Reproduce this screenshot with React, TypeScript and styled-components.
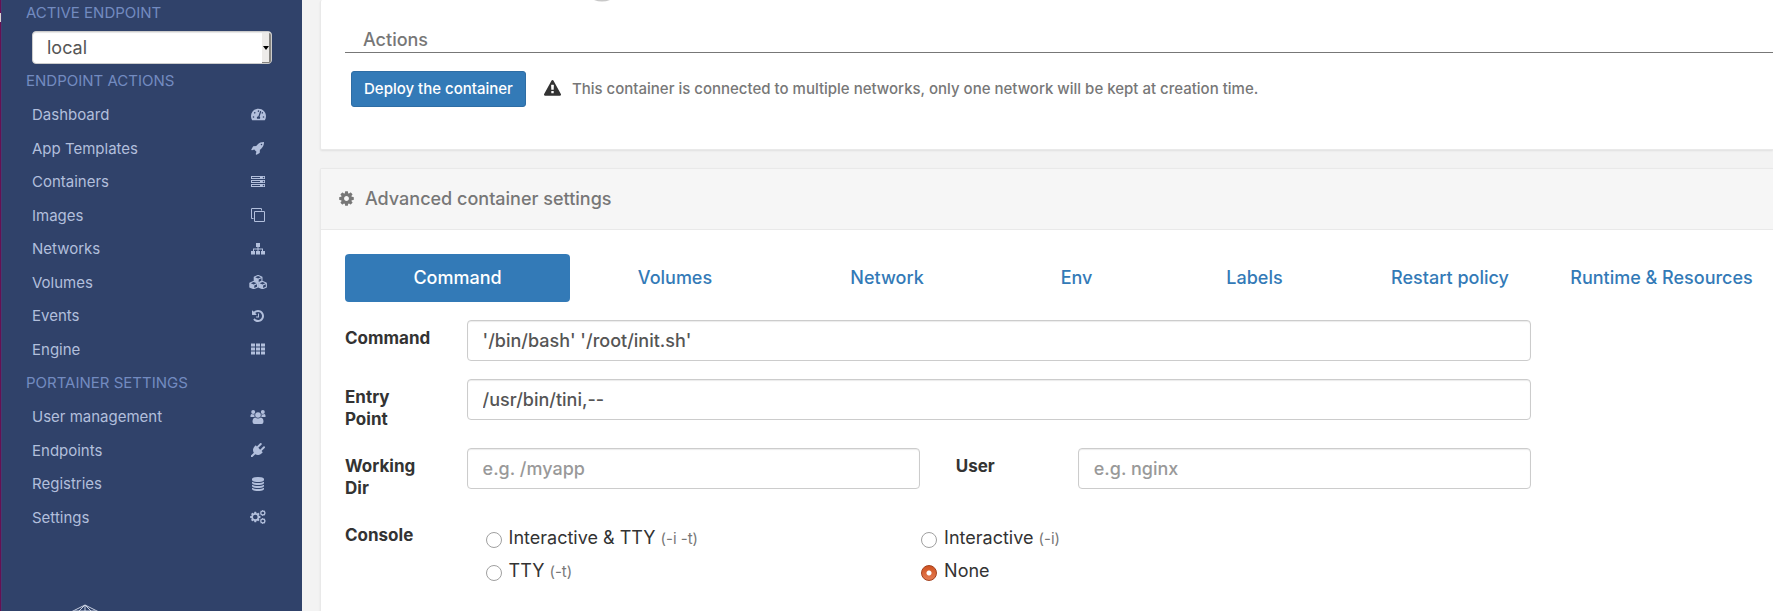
import React from 'react';
import styled, { createGlobalStyle } from 'styled-components';
import { FaTachometerAlt } from 'react-icons/fa';

const GlobalStyle = createGlobalStyle`
  *, *::before, *::after { box-sizing: border-box; }
  html, body { margin: 0; background: #f3f3f3; }
  body, button, input, select { font-family: Inter, "Open Sans", sans-serif; }
  body { font-size: 16px; color: #333; }
`;

const Page = styled.div`
  display: flex;
  min-height: 100vh;
`;

const WindowEdge = styled.div`
  flex: 0 0 1px;
  background: linear-gradient(#661052 13px, #d9d5d1 13px 22px, #661052 22px);
`;

const Sidebar = styled.aside`
  position: sticky;
  top: 0;
  flex: 0 0 301px;
  align-self: flex-start;
  display: flex;
  flex-direction: column;
  height: 100vh;
  border-left: 1px solid #433c70;
  background: #30426a;
`;

const SidebarTitle = styled.h2`
  margin: 0;
  padding-left: 24px;
  font-size: 15px;
  font-weight: 400;
  line-height: 34px;
  color: #738bc0;
`;

const EndpointTitle = styled(SidebarTitle)`
  line-height: 26px;
`;

const EndpointBox = styled.div`
  position: relative;
  margin: 5px 30px 0;
`;

const EndpointSelect = styled.select`
  display: block;
  width: 100%;
  height: 33px;
  padding: 0 14px;
  appearance: none;
  border: 1px solid #ccc;
  border-radius: 4px;
  background: #fff;
  box-shadow: inset 0 1px 1px rgba(0, 0, 0, 0.1);
  font-size: 18px;
  color: #555;
`;

const SelectHandle = styled.span`
  position: absolute;
  top: 2px;
  right: 1px;
  bottom: 1px;
  width: 9px;
  display: flex;
  align-items: center;
  justify-content: center;
  border-right: 2px solid #85837f;
  border-bottom: 1px solid #85837f;
  border-radius: 0 2px 2px 0;
  background: #edebe9;
  pointer-events: none;
`;

const MenuList = styled.ul<{ $height: number }>`
  display: grid;
  grid-auto-rows: 1fr;
  height: ${(p) => p.$height}px;
  margin: 0;
  padding: 0 35px 0 30px;
  list-style: none;
`;

const MenuLink = styled.a`
  display: flex;
  align-items: center;
  justify-content: space-between;
  height: 100%;
  font-size: 15px;
  color: #b2bfdc;
  text-decoration: none;
`;

const IconSlot = styled.span`
  display: flex;
  justify-content: center;
  width: 18px;
`;

const SidebarFooter = styled.div`
  display: flex;
  height: 7px;
  margin-top: auto;
  padding-left: 69px;
  overflow: hidden;
`;

const Main = styled.main`
  flex: 1;
  min-width: 0;
  padding-left: 18px;
  overflow: hidden;
`;

const Widget = styled.section`
  border: 1px solid #e9e9e9;
  border-width: 1px 0 1px 1px;
  border-radius: 2px 0 0 2px;
  background: #fff;
  box-shadow: 0 1px 2px rgba(0, 0, 0, 0.08);
`;

const ActionsWidget = styled(Widget)`
  margin-bottom: 18px;
  padding: 0 0 42px 24px;
  border-top: 0;
`;

const KnobEdge = styled.div`
  display: flex;
  align-items: flex-start;
  height: 24px;
  padding-left: 247px;
`;

const SectionTitle = styled.h3`
  margin: 0;
  padding: 4px 0 0 18px;
  border-bottom: 1px solid #777;
  font-size: 18px;
  font-weight: 500;
  line-height: 24px;
  color: #777;
`;

const ActionBar = styled.div`
  display: flex;
  align-items: center;
  padding: 18px 0 0 6px;
`;

const DeployButton = styled.button`
  height: 36px;
  padding: 0 12px 1px;
  border: 1px solid #2e6da4;
  border-radius: 3px;
  background: #337ab7;
  color: #fff;
  font-size: 15px;
  font-weight: 500;
`;

const WarningNote = styled.p`
  display: flex;
  align-items: center;
  gap: 11px;
  margin: 0 0 0 18px;
  padding-bottom: 2px;
  font-size: 15px;
  font-weight: 500;
  color: #777;
`;

const WidgetHeader = styled.header`
  display: flex;
  align-items: center;
  gap: 10px;
  height: 61px;
  padding: 0 0 2px 17px;
  border-bottom: 1px solid #e9e9e9;
  background: #f6f6f6;
  color: #777;
`;

const WidgetTitle = styled.h2`
  margin: 0;
  font-size: 18px;
  font-weight: 500;
`;

const WidgetBody = styled.div`
  padding: 24px 0 24px 24px;
`;

const Tabs = styled.nav`
  display: grid;
  grid-template-columns: 225fr 206fr 214fr 161fr 191fr 196fr 223fr;
  gap: 2px;
  margin-bottom: 18px;
`;

const Tab = styled.a<{ $active?: boolean }>`
  display: flex;
  align-items: center;
  justify-content: center;
  height: 48px;
  padding-bottom: 2px;
  border-radius: 4px;
  background: ${(p) => (p.$active ? '#337ab7' : 'transparent')};
  color: ${(p) => (p.$active ? '#fff' : '#337ab7')};
  font-size: 18px;
  font-weight: 500;
  text-decoration: none;
  white-space: nowrap;
`;

const FormRow = styled.div`
  display: grid;
  grid-template-columns: repeat(12, minmax(0, 1fr));
  margin: 0 -16px 18px -15px;
`;

const Field = styled.div`
  grid-column: span 9;
  padding: 0 15px;
`;

const FieldPair = styled(Field)`
  display: grid;
  grid-template-columns: 1fr 158px 1fr;
`;

const FieldLabel = styled.label`
  padding: 7px 20px 0 15px;
  font-size: 17px;
  font-weight: 700;
  line-height: 22px;
`;

const InnerLabel = styled(FieldLabel)`
  padding-left: 36px;
`;

const TextInput = styled.input`
  display: block;
  width: 100%;
  height: 41px;
  padding: 0 15px;
  border: 1px solid #ccc;
  border-radius: 4px;
  background: #fff;
  box-shadow: inset 0 1px 1px rgba(0, 0, 0, 0.08);
  font-size: 18px;
  font-weight: 500;
  color: #555;
  &::placeholder { color: #999; opacity: 1; }
`;

const RadioGrid = styled.div`
  display: grid;
  grid-template-columns: 5fr 7fr;
  grid-auto-rows: 33px;
  padding: 4px 0 0 19px;
`;

const RadioLabel = styled.label`
  display: flex;
  align-items: center;
  gap: 7px;
  font-size: 18px;
`;

const Radio = styled.input`
  appearance: none;
  width: 16px;
  height: 16px;
  margin: 4px 0 0;
  border: 1px solid #a0a0a0;
  border-radius: 50%;
  background: #fff;
  &:checked {
    border-color: #a4401c;
    background: radial-gradient(circle, #fff 2px, rgba(255, 255, 255, 0) 3px),
      linear-gradient(#d0521f, #e47c54);
  }
`;

const Flag = styled.small`
  font-size: 15px;
  color: #777;
`;

type GlyphProps = { d: string; size?: number };

const Glyph = ({ d, size = 14 }: GlyphProps) => (
  <svg width={size} height={size} viewBox="0 0 1792 1792" fill="currentColor" aria-hidden="true">
    <path d={d} />
  </svg>
);

const dots = 'q0-40-28-68t-68-28-68 28-28 68 28 68 68 28 68-28 28-68z';
const disc = 'q237 0 443-43t325-127v170q0 69-103 128t-280 93.5-385 34.5-385-34.5-280-93.5-103-128v-170q119 84 325 127t443 43z';

const paths = {
  rocket:
    'M1440 448q0-40-28-68t-68-28-68 28-28 68 28 68 68 28 68-28 28-68zm224-288q0 249-75.5 430.5t-253.5 360.5q-81 80-195 176l-20 379q-2 16-16 26l-384 224q-7 4-16 4-12 0-23-9l-64-64q-13-14-8-32l85-276-281-281-276 85q-3 1-9 1-14 0-23-9l-64-64q-17-19-5-39l224-384q10-14 26-16l379-20q96-114 176-195 188-187 358-258t431-71q14 0 24 9.5t10 22.5z',
  server:
    `M128 1408h1024v-128h-1024v128zm0-512h1024v-128h-1024v128zm1568 448${dots}m-1568-960h1024v-128h-1024v128zm1568 448${dots}m0-512${dots}m96 832v384h-1792v-384h1792zm0-512v384h-1792v-384h1792zm0-512v384h-1792v-384h1792z`,
  clone:
    'M1664 1632v-1088q0-13-9.5-22.5t-22.5-9.5h-1088q-13 0-22.5 9.5t-9.5 22.5v1088q0 13 9.5 22.5t22.5 9.5h1088q13 0 22.5-9.5t9.5-22.5zm128-1088v1088q0 66-47 113t-113 47h-1088q-66 0-113-47t-47-113v-1088q0-66 47-113t113-47h1088q66 0 113 47t47 113zm-384-384v160h-128v-160q0-13-9.5-22.5t-22.5-9.5h-1088q-13 0-22.5 9.5t-9.5 22.5v1088q0 13 9.5 22.5t22.5 9.5h160v128h-160q-66 0-113-47t-47-113v-1088q0-66 47-113t113-47h1088q66 0 113 47t47 113z',
  sitemap:
    'M640 128h512v512h-192v192h576v320h256v448h-512v-448h128v-192h-448v192h192v448h-512v-448h192v-192h-448v192h128v448h-512v-448h256v-320h576v-192h-192z',
  history:
    'M1664 896q0 156-61 298t-164 245-245 164-298 61q-172 0-327-72.5t-264-204.5q-7-10-6.5-22.5t8.5-20.5l137-138q10-9 25-9 16 2 23 12 73 95 179 147t225 52q104 0 198.5-40.5t163.5-109.5 109.5-163.5 40.5-198.5-40.5-198.5-109.5-163.5-163.5-109.5-198.5-40.5q-98 0-188 35.5t-160 101.5l137 138q31 30 14 69-17 40-59 40h-448q-26 0-45-19t-19-45v-448q0-42 40-59 39-17 69 14l130 129q107-101 244.5-156.5t284.5-55.5q156 0 298 61t245 164 164 245 61 298zm-640-288v448q0 14-9 23t-23 9h-320q-14 0-23-9t-9-23v-64q0-14 9-23t23-9h224v-352q0-14 9-23t23-9h64q14 0 23 9t9 23z',
  grid:
    'M0 192h512v384h-512zM640 192h512v384h-512zM1280 192h512v384h-512zM0 704h512v384h-512zM640 704h512v384h-512zM1280 704h512v384h-512zM0 1216h512v384h-512zM640 1216h512v384h-512zM1280 1216h512v384h-512z',
  plug:
    'M1755 453q37 38 37 90.5t-37 90.5l-401 400 150 150-160 160q-163 163-389.5 186.5t-411.5-100.5l-362 362h-181v-181l362-362q-124-185-100.5-411.5t186.5-389.5l160-160 150 150 400-401q38-37 91-37t90 37 37 90.5-37 90.5l-400 401 234 234 401-400q38-37 91-37t90 37z',
  database:
    `M896 768${disc}m0 768${disc}m0-384${disc}m0-1152q208 0 385 34.5t280 93.5 103 128v128q0 69-103 128t-280 93.5-385 34.5-385-34.5-280-93.5-103-128v-128q0-69 103-128t280-93.5 385-34.5z`,
  cog:
    'M1152 896q0-106-75-181t-181-75-181 75-75 181 75 181 181 75 181-75 75-181zm512-109v222q0 12-8 23t-20 13l-185 28q-19 54-39 91 35 50 107 138 10 12 10 25t-9 23q-27 37-99 108t-94 71q-12 0-26-9l-138-108q-44 23-91 38-16 136-29 186-7 28-36 28h-222q-14 0-24.5-8.5t-11.5-21.5l-28-184q-49-16-90-37l-141 107q-10 9-25 9-14 0-25-11-126-114-165-168-7-10-7-23 0-12 8-23 15-21 51-66.5t54-70.5q-27-50-41-99l-183-27q-13-2-21-12.5t-8-23.5v-222q0-12 8-23t19-13l186-28q14-46 39-92-40-57-107-138-10-12-10-24 0-10 9-23 26-36 98.5-107.5t94.5-71.5q13 0 26 10l138 107q44-23 91-38 16-136 29-186 7-28 36-28h222q14 0 24.5 8.5t11.5 21.5l28 184q49 16 90 37l142-107q9-9 24-9 13 0 25 10 129 119 165 170 7 8 7 22 0 12-8 23-15 21-51 66.5t-54 70.5q26 50 41 98l183 28q13 2 21 12.5t8 23.5z',
  warning:
    'M1024 1375v-190q0-14-9.5-23.5t-22.5-9.5h-192q-13 0-22.5 9.5t-9.5 23.5v190q0 14 9.5 23.5t22.5 9.5h192q13 0 22.5-9.5t9.5-23.5zm-2-374l18-459q0-12-10-19-13-11-24-11h-220q-11 0-24 11-10 7-10 21l17 457q0 10 10 16.5t24 6.5h185q14 0 23.5-6.5t10.5-16.5zm-14-934l768 1408q35 63-2 126-17 29-46.5 46t-63.5 17h-1536q-34 0-63.5-17t-46.5-46q-37-63-2-126l768-1408q17-31 47-49t65-18 65 18 47 49z',
};

const CubesIcon = () => (
  <svg width="18" height="14" viewBox="0 0 18 14" aria-hidden="true">
    {[[4.7, 0], [0.3, 6], [9.1, 6]].map(([x, y]) => (
      <g key={x} transform={`translate(${x} ${y})`}>
        <path d="M0 2.2Q0 1.7 .6 1.500L3.900 .1h1L8.200 1.500q.6.200.6.700v3.700q0 .5-.5.800L4.900 8.100h-1L.5 6.700Q0 6.400 0 5.900z" fill="currentColor" />
        <path d="M1.500 2.200 4.400 1l2.900 1.200-2.900 1.200zM5 4.500l2.700-1.200v2.500L5 7z" fill="#30426a" />
      </g>
    ))}
  </svg>
);

const UsersIcon = () => (
  <svg width="16" height="14" viewBox="0 0 16 14" fill="currentColor" aria-hidden="true">
    <circle cx="3.200" cy="2" r="2" />
    <circle cx="12.800" cy="2" r="2" />
    <path d="M.5 7V5.500Q.6 4 1.700 4l1.500.5 1.500-.3Q4 6 4.800 7zM15.500 7V5.500q-.1-1.500-1.200-1.500l-1.500.5-1.500-.3Q12 6 11.200 7z" />
    <circle cx="8" cy="5" r="2.800" />
    <path d="M5.200 7.500Q8 9.600 10.800 7.500 13.500 8 13.500 11.800 13.500 14 11.500 14h-7Q2.500 14 2.500 11.800 2.500 8 5.200 7.500z" />
  </svg>
);

const CogsIcon = () => (
  <svg width="16" height="14" viewBox="0 0 16 14" aria-hidden="true">
    {[[5.3, 7, 12, 2.3], [12.8, 3, 7, 1.3], [12.8, 11, 7, 1.3]].map(([cx, cy, size, hole]) => (
      <g key={cy}>
        <svg x={cx - size / 2} y={cy - size / 2} width={size} height={size} viewBox="0 0 1792 1792">
          <path d={paths.cog} fill="currentColor" />
        </svg>
        <circle cx={cx} cy={cy} r={hole} fill="#30426a" />
      </g>
    ))}
  </svg>
);

const actionItems: [string, React.ReactNode][] = [
  ['Dashboard', <FaTachometerAlt size={15} />],
  ['App Templates', <Glyph d={paths.rocket} />],
  ['Containers', <Glyph d={paths.server} />],
  ['Images', <Glyph d={paths.clone} />],
  ['Networks', <Glyph d={paths.sitemap} />],
  ['Volumes', <CubesIcon />],
  ['Events', <Glyph d={paths.history} />],
  ['Engine', <Glyph d={paths.grid} />],
];

const settingItems: [string, React.ReactNode][] = [
  ['User management', <UsersIcon />],
  ['Endpoints', <Glyph d={paths.plug} />],
  ['Registries', <Glyph d={paths.database} />],
  ['Settings', <CogsIcon />],
];

const tabNames = ['Command', 'Volumes', 'Network', 'Env', 'Labels', 'Restart policy', 'Runtime & Resources'];

const consoleModes = [
  { id: 'it', name: 'Interactive & TTY', flag: '(-i -t)' },
  { id: 'i', name: 'Interactive', flag: '(-i)' },
  { id: 't', name: 'TTY', flag: '(-t)' },
  { id: 'none', name: 'None', flag: '' },
];

const Menu = ({ items, height }: { items: [string, React.ReactNode][]; height: number }) => (
  <MenuList $height={height}>
    {items.map(([name, icon]) => (
      <li key={name}>
        <MenuLink href="#">
          {name}
          <IconSlot>{icon}</IconSlot>
        </MenuLink>
      </li>
    ))}
  </MenuList>
);

export default function App() {
  return (
    <>
      <GlobalStyle />
      <Page>
        <WindowEdge />
        <Sidebar>
          <EndpointTitle as="label" htmlFor="endpoint">ACTIVE ENDPOINT</EndpointTitle>
          <EndpointBox>
            <EndpointSelect id="endpoint" defaultValue="local">
              <option value="local">local</option>
            </EndpointSelect>
            <SelectHandle>
              <svg width="6" height="4" viewBox="0 0 6 4" aria-hidden="true">
                <path d="M0 0h6L3 4z" fill="#000" />
              </svg>
            </SelectHandle>
          </EndpointBox>
          <SidebarTitle>ENDPOINT ACTIONS</SidebarTitle>
          <Menu items={actionItems} height={268} />
          <SidebarTitle>PORTAINER SETTINGS</SidebarTitle>
          <Menu items={settingItems} height={134} />
          <SidebarFooter>
            <svg width="28" height="28" viewBox="0 0 28 28" fill="none" stroke="#c9d1e3" aria-hidden="true">
              <path d="M0 8 14 1l14 7M14 1v10M14 1 7 8M14 1l7 7M4 7h20" />
            </svg>
          </SidebarFooter>
        </Sidebar>
        <Main>
          <ActionsWidget>
            <KnobEdge>
              <svg width="20" height="2" viewBox="0 0 20 2" aria-hidden="true">
                <path d="M2 0h16q-8 3-16 0z" fill="#c8c8c8" />
              </svg>
            </KnobEdge>
            <SectionTitle>Actions</SectionTitle>
            <ActionBar>
              <DeployButton type="button">Deploy the container</DeployButton>
              <WarningNote>
                <svg width="17" height="17" viewBox="0 0 1792 1792" fill="#333" aria-hidden="true">
                  <path d={paths.warning} />
                </svg>
                This container is connected to multiple networks, only one network will be kept at creation time.
              </WarningNote>
            </ActionBar>
          </ActionsWidget>
          <Widget>
            <WidgetHeader>
              <Glyph d={paths.cog} size={17} />
              <WidgetTitle>Advanced container settings</WidgetTitle>
            </WidgetHeader>
            <WidgetBody>
              <Tabs>
                {tabNames.map((name, i) => (
                  <Tab key={name} href="#" $active={i === 0}>{name}</Tab>
                ))}
              </Tabs>
              <form>
                <FormRow>
                  <FieldLabel htmlFor="command">Command</FieldLabel>
                  <Field>
                    <TextInput id="command" defaultValue="'/bin/bash' '/root/init.sh'" />
                  </Field>
                </FormRow>
                <FormRow>
                  <FieldLabel htmlFor="entrypoint">Entry Point</FieldLabel>
                  <Field>
                    <TextInput id="entrypoint" defaultValue="/usr/bin/tini,--" />
                  </Field>
                </FormRow>
                <FormRow>
                  <FieldLabel htmlFor="workdir">Working Dir</FieldLabel>
                  <FieldPair>
                    <TextInput id="workdir" placeholder="e.g. /myapp" />
                    <InnerLabel htmlFor="user">User</InnerLabel>
                    <TextInput id="user" placeholder="e.g. nginx" />
                  </FieldPair>
                </FormRow>
                <FormRow role="radiogroup" aria-labelledby="console-label">
                  <FieldLabel as="span" id="console-label">Console</FieldLabel>
                  <Field>
                    <RadioGrid>
                      {consoleModes.map((mode) => (
                        <RadioLabel key={mode.id} htmlFor={mode.id}>
                          <Radio type="radio" name="console" id={mode.id} defaultChecked={mode.id === 'none'} />
                          <span>
                            {mode.name} {mode.flag && <Flag>{mode.flag}</Flag>}
                          </span>
                        </RadioLabel>
                      ))}
                    </RadioGrid>
                  </Field>
                </FormRow>
              </form>
            </WidgetBody>
          </Widget>
        </Main>
      </Page>
    </>
  );
}
